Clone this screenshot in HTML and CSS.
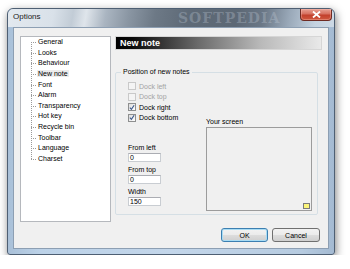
FILE: index.html
```html
<!DOCTYPE html>
<html>
<head>
<meta charset="utf-8">
<link rel="stylesheet" href="styles.css">
</head>
<body>
<div class="window">
  <div class="titlebar">
    <span class="title">Options</span>
    <span class="wm-title">SOFTPEDIA</span>
    <button class="close" aria-label="Close">
      <svg width="9" height="7" viewBox="0 0 9 7"><path d="M1 0.5 L8 6.5 M8 0.5 L1 6.5" stroke="#fff" stroke-width="1.8" fill="none"/></svg>
    </button>
  </div>
  <div class="content">
    <div class="main">
      <div class="tree">
        <ul class="tree-list">
          <li>General</li>
          <li>Looks</li>
          <li>Behaviour</li>
          <li><span class="sel">New note</span></li>
          <li>Font</li>
          <li>Alarm</li>
          <li>Transparency</li>
          <li>Hot key</li>
          <li>Recycle bin</li>
          <li>Toolbar</li>
          <li>Language</li>
          <li>Charset</li>
        </ul>
      </div>
      <div class="panel">
        <div class="panel-header">New note</div>
        <fieldset class="group">
          <legend>Position of new notes</legend>
          <div class="group-grid">
            <div class="left-col">
              <div class="checks">
                <label class="check disabled"><span class="box"></span>Dock left</label>
                <label class="check disabled"><span class="box"></span>Dock top</label>
                <label class="check"><span class="box checked"><svg width="7" height="7" viewBox="0 0 7 7"><path d="M1 3.6 L2.8 5.6 L6 0.8" stroke="#3d5a8c" stroke-width="1.3" fill="none"/></svg></span>Dock right</label>
                <label class="check"><span class="box checked"><svg width="7" height="7" viewBox="0 0 7 7"><path d="M1 3.6 L2.8 5.6 L6 0.8" stroke="#3d5a8c" stroke-width="1.3" fill="none"/></svg></span>Dock bottom</label>
              </div>
              <div class="fields">
                <div class="field"><div class="flabel">From left</div><div class="input">0</div></div>
                <div class="field"><div class="flabel">From top</div><div class="input">0</div></div>
                <div class="field"><div class="flabel">Width</div><div class="input">150</div></div>
              </div>
            </div>
            <div class="right-col">
              <div class="flabel">Your screen</div>
              <div class="screen"><span class="note-pos"></span></div>
            </div>
          </div>
        </fieldset>
      </div>
    </div>
    <div class="buttons">
      <button class="btn default">OK</button>
      <button class="btn">Cancel</button>
    </div>
  </div>
</div>
</body>
</html>
```
FILE: styles.css
```css
html, body {
  margin: 0;
  padding: 0;
  background: #ffffff;
}
body {
  font-family: "Liberation Sans", Arial, sans-serif;
  font-size: 7px;
  color: #000;
}
.window {
  margin: 8px 0 0 7px;
  width: 328px;
  height: 247px;
  box-sizing: border-box;
  border: 1px solid #4e5f73;
  border-radius: 6px 6px 3px 3px;
  background: linear-gradient(to right, #a9c0d8 0%, #bcd2e8 10%, #c3d6ea 50%, #b6cbe0 90%, #a4bad2 100%);
  box-shadow: 1px 3px 8px rgba(0, 0, 0, 0.5);
  padding: 0 5px 5px 5px;
  display: flex;
  flex-direction: column;
  overflow: hidden;
}
.titlebar {
  height: 18px;
  margin: 0 -5px;
  padding: 0 2px 0 5px;
  display: flex;
  align-items: flex-start;
  position: relative;
  border-radius: 5px 5px 0 0;
  background: linear-gradient(100deg, #e3e9ef 0%, #d9e1e9 14%, #c2ccd6 20%, #dfe5eb 24%, #aab5c1 30%, #8a96a3 37%, #6d7986 45%, #5e6a77 55%, #5c6875 70%, #6b7887 78%, #9aa9b9 86%, #c4d2e0 94%, #cdd9e5 100%);
}
.title {
  font-size: 8px;
  line-height: 10px;
  margin-top: 3px;
  color: #1a1a1a;
}
.wm-title {
  position: absolute;
  left: 170px;
  top: 1px;
  font-family: "DejaVu Serif", serif;
  font-weight: bold;
  font-size: 14px;
  letter-spacing: 1px;
  line-height: 16px;
  color: rgba(200, 210, 222, 0.3);
}
.close {
  margin-left: auto;
  width: 32px;
  height: 12px;
  padding: 0;
  border: 1px solid #6e2a22;
  border-top: none;
  border-radius: 0 0 4px 4px;
  background: linear-gradient(to bottom, #e8a194 0%, #d6705f 45%, #c2402c 55%, #d0583f 100%);
  display: flex;
  align-items: center;
  justify-content: center;
  box-shadow: inset 0 0 0 1px rgba(255, 200, 190, 0.35);
}
.close svg { display: block; }
.content {
  flex: 1;
  background: #f0f0f0;
  border: 1px solid #8d9fb3;
  padding: 8px 6px 6px 6px;
  display: flex;
  flex-direction: column;
}
.main {
  display: flex;
  gap: 4px;
  height: 186px;
}
.tree {
  width: 91px;
  box-sizing: border-box;
  border: 1px solid #b5b8bd;
  background: #ffffff;
}
.tree-list {
  list-style: none;
  margin: 0;
  padding: 0 0 0 10px;
  position: relative;
}
.tree-list::before {
  content: "";
  position: absolute;
  left: 10px;
  top: 5.32px;
  bottom: 5.32px;
  border-left: 1px dotted #9a9a9a;
}
.tree-list li {
  position: relative;
  height: 10.64px;
  line-height: 10.64px;
  padding-left: 7px;
  white-space: nowrap;
}
.tree-list li::before {
  content: "";
  position: absolute;
  left: 0;
  top: 5px;
  width: 5px;
  border-top: 1px dotted #9a9a9a;
}
.sel {
  background: #ececec;
  padding: 0 1px;
  margin-left: -1px;
}
.panel {
  width: 207px;
  display: flex;
  flex-direction: column;
}
.panel-header {
  height: 14px;
  box-sizing: border-box;
  border: 1px solid #d6d6d6;
  background: linear-gradient(to right, #000000 0%, #0a0a0a 8%, #6a6a6a 40%, #b8b8b8 70%, #e9e9e9 100%);
  color: #ffffff;
  font-weight: bold;
  font-size: 9px;
  line-height: 12px;
  padding-left: 4px;
}
.group {
  margin: 18px 0 0 0;
  width: 203px;
  box-sizing: border-box;
  border: 1px solid #d5dfe5;
  border-radius: 2px;
  padding: 5px 4px 3px 12px;
  min-width: 0;
}
.group legend {
  padding: 0 2px;
  margin-left: -7px;
  line-height: 8px;
  font-size: 7px;
}
.group-grid {
  display: grid;
  grid-template-columns: 78px 106px;
  height: 130px;
}
.left-col {
  display: flex;
  flex-direction: column;
}
.checks {
  display: flex;
  flex-direction: column;
}
.check {
  display: flex;
  align-items: center;
  gap: 3px;
  height: 10.5px;
  white-space: nowrap;
}
.check.disabled {
  color: #a3a3a3;
}
.box {
  width: 8px;
  height: 8px;
  box-sizing: border-box;
  border: 1px solid #8e8f8f;
  background: linear-gradient(135deg, #dcdcdc, #ffffff);
  display: flex;
  align-items: center;
  justify-content: center;
}
.check.disabled .box {
  border-color: #c9c9c9;
  background: #f4f4f4;
}
.box svg { display: block; }
.fields {
  margin-top: 21px;
  display: flex;
  flex-direction: column;
  gap: 4px;
}
.flabel {
  line-height: 8px;
  white-space: nowrap;
}
.input {
  margin-top: 1px;
  width: 33px;
  height: 9px;
  box-sizing: border-box;
  background: #ffffff;
  border: 1px solid #c9cdd2;
  border-top-color: #abadb3;
  line-height: 7px;
  padding-left: 1px;
}
.right-col {
  align-self: end;
  display: flex;
  flex-direction: column;
  gap: 1px;
}
.screen {
  height: 84px;
  box-sizing: border-box;
  border: 1px solid #9c9c9c;
  display: flex;
  align-items: flex-end;
  justify-content: flex-end;
  padding: 0 1px 1px 0;
}
.note-pos {
  width: 7px;
  height: 6px;
  box-sizing: border-box;
  border: 1px solid #7a7a7a;
  background: #fbf57a;
}
.buttons {
  margin-top: 6px;
  display: flex;
  justify-content: flex-end;
  gap: 4px;
  padding-right: 2px;
}
.btn {
  height: 14px;
  width: 48px;
  padding: 0;
  box-sizing: border-box;
  font-family: "Liberation Sans", Arial, sans-serif;
  font-size: 7px;
  color: #000;
  border: 1px solid #707070;
  border-radius: 3px;
  background: linear-gradient(to bottom, #f2f2f2 0%, #ebebeb 49%, #dddddd 51%, #cfcfcf 100%);
}
.btn.default {
  width: 47px;
  border-color: #3c7fb1;
  box-shadow: inset 0 0 0 1px #a9dcf4;
}
```
